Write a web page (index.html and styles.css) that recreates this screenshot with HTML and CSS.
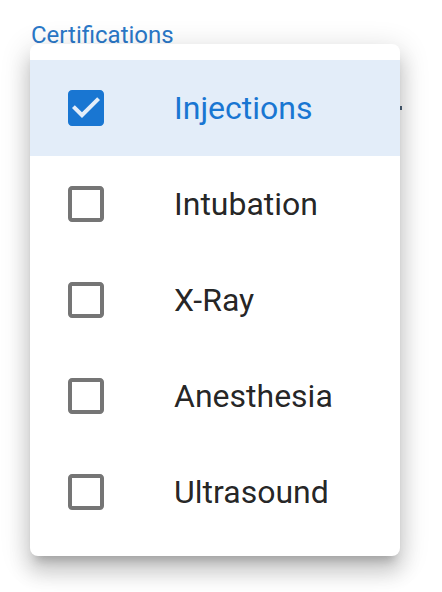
FILE: index.html
```html
<!DOCTYPE html>
<html>
<head>
<meta charset="utf-8">
<link rel="stylesheet" href="styles.css">
</head>
<body>
<div class="field">
  <div class="label">Certifications</div>
  <span class="peek"></span>
  <ul class="menu">
    <li class="item selected">
      <svg class="cb" viewBox="0 0 24 24"><path d="M19 3H5c-1.11 0-2 .9-2 2v14c0 1.1.89 2 2 2h14c1.11 0 2-.9 2-2V5c0-1.1-.89-2-2-2zm-9 14l-5-5 1.41-1.41L10 14.17l7.59-7.59L19 8l-9 9z"/></svg>
      <span class="text">Injections</span>
    </li>
    <li class="item">
      <svg class="cb" viewBox="0 0 24 24"><path d="M19 5v14H5V5h14m0-2H5c-1.1 0-2 .9-2 2v14c0 1.1.9 2 2 2h14c1.1 0 2-.9 2-2V5c0-1.1-.9-2-2-2z"/></svg>
      <span class="text">Intubation</span>
    </li>
    <li class="item">
      <svg class="cb" viewBox="0 0 24 24"><path d="M19 5v14H5V5h14m0-2H5c-1.1 0-2 .9-2 2v14c0 1.1.9 2 2 2h14c1.1 0 2-.9 2-2V5c0-1.1-.9-2-2-2z"/></svg>
      <span class="text">X-Ray</span>
    </li>
    <li class="item">
      <svg class="cb" viewBox="0 0 24 24"><path d="M19 5v14H5V5h14m0-2H5c-1.1 0-2 .9-2 2v14c0 1.1.9 2 2 2h14c1.1 0 2-.9 2-2V5c0-1.1-.9-2-2-2z"/></svg>
      <span class="text">Anesthesia</span>
    </li>
    <li class="item">
      <svg class="cb" viewBox="0 0 24 24"><path d="M19 5v14H5V5h14m0-2H5c-1.1 0-2 .9-2 2v14c0 1.1.9 2 2 2h14c1.1 0 2-.9 2-2V5c0-1.1-.9-2-2-2z"/></svg>
      <span class="text">Ultrasound</span>
    </li>
  </ul>
</div>
</body>
</html>
```
FILE: styles.css
```css
html, body {
  margin: 0;
  padding: 0;
  background: #ffffff;
}
body {
  font-family: Roboto, "Liberation Sans", Arial, sans-serif;
  width: 442px;
  height: 592px;
  overflow: hidden;
}
.field {
  position: relative;
  padding-top: 23px;
}
.label {
  margin-left: 31px;
  font-size: 24px;
  line-height: 24px;
  color: #2a78c8;
  height: 21px;
}
.peek {
  position: absolute;
  left: 400px;
  top: 106px;
  width: 2px;
  height: 4px;
  background: #4a5f75;
}
.menu {
  position: relative;
  list-style: none;
  margin: 0 0 0 30px;
  padding: 16px 0;
  width: 370px;
  background: #ffffff;
  border-radius: 8px;
  box-shadow: 0 10px 10px -6px rgba(0,0,0,0.2),
              0 16px 20px 2px rgba(0,0,0,0.14),
              0 6px 28px 4px rgba(0,0,0,0.12);
  overflow: hidden;
}
.item {
  display: flex;
  align-items: center;
  height: 96px;
  padding-left: 32px;
}
.item.selected {
  background: #e3edf9;
}
.cb {
  width: 48px;
  height: 48px;
  fill: #757575;
  flex: none;
}
.selected .cb {
  fill: #1976d2;
}
.text {
  margin-left: 64px;
  font-size: 32px;
  color: rgba(0,0,0,0.87);
  line-height: 1;
}
.selected .text {
  color: #1976d2;
}
```
